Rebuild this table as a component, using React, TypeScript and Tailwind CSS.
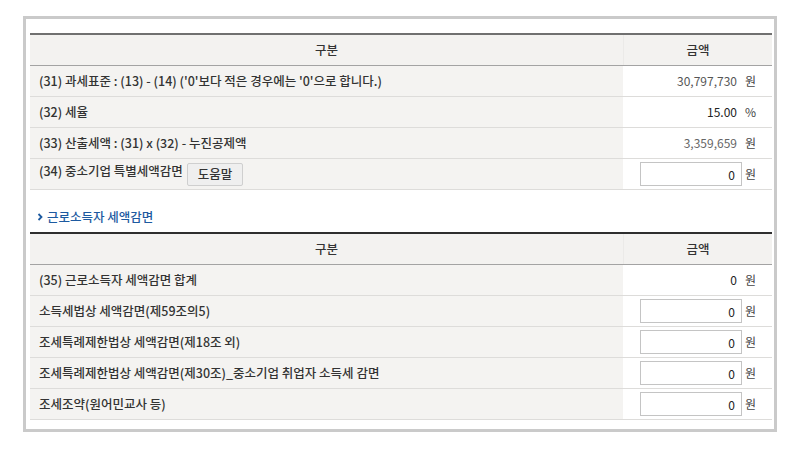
import React from 'react'

type Row = {
  label: string
  value?: string
  valueClass?: string
  unit?: string
  input?: boolean
  help?: boolean
}

const taxRows: Row[] = [
  { label: "(31) 과세표준 : (13) - (14) ('0'보다 적은 경우에는 '0'으로 합니다.)", value: '30,797,730', valueClass: 'text-[#555]' },
  { label: '(32) 세율', value: '15.00', valueClass: 'text-[#222]', unit: '%' },
  { label: '(33) 산출세액 : (31) x (32) - 누진공제액', value: '3,359,659', valueClass: 'text-[#666]' },
  { label: '(34) 중소기업 특별세액감면', input: true, help: true },
]

const reliefRows: Row[] = [
  { label: '(35) 근로소득자 세액감면 합계', value: '0', valueClass: 'text-[#222]' },
  { label: '소득세법상 세액감면(제59조의5)', input: true },
  { label: '조세특례제한법상 세액감면(제18조 외)', input: true },
  { label: '조세특례제한법상 세액감면(제30조)_중소기업 취업자 소득세 감면', input: true },
  { label: '조세조약(원어민교사 등)', input: true },
]

function HeaderRow() {
  return (
    <div className="flex h-[31px] border-b border-[#a3a3a3] bg-[#f3f2f0] text-[12.5px] font-medium text-[#333]">
      <div className="flex w-[593px] items-center justify-center">구분</div>
      <div className="flex flex-1 items-center justify-center border-l border-[#ebeae8]">금액</div>
    </div>
  )
}

function DataRow({ row }: { row: Row }) {
  return (
    <div className="flex h-[31px] border-b border-[#dddcda]">
      <div className="flex w-[593px] items-center gap-[4px] bg-[#f4f3f1] pl-[9px] text-[12.5px] font-medium text-[#333]">
        <span className={row.help ? '-mt-[6px]' : ''}>{row.label}</span>
        {row.help && (
          <button className="h-[23px] rounded-[2px] border border-[#cfcfcf] bg-[#efefef] px-[10px] text-[12.5px] text-[#333]">
            도움말
          </button>
        )}
      </div>
      <div className="flex flex-1 items-center justify-end bg-white pr-[15px] text-[12px]">
        {row.input ? (
          <input
            readOnly
            value="0"
            className="mr-[3px] h-[24px] w-[102px] border border-[#c4c4c4] bg-white pr-[6px] text-right text-[12px] text-[#222] outline-none"
          />
        ) : (
          <span className={`mr-[8px] ${row.valueClass ?? ''}`}>{row.value}</span>
        )}
        <span className="w-[12px] text-[12px] text-[#444]">{row.unit ?? '원'}</span>
      </div>
    </div>
  )
}

export default function App() {
  return (
    <div className="h-[450px] w-[801px] bg-white pl-[23px] pt-[16px] font-['Noto_Sans_CJK_KR',sans-serif]">
      <div className="h-[416px] w-[754px] border-[3px] border-[#cacaca] pl-[4px] pr-[2px] pt-[14px]">
        {/* 세액 계산 */}
        <div className="border-t-2 border-[#707070]">
          <HeaderRow />
          {taxRows.map(row => (
            <DataRow key={row.label} row={row} />
          ))}
        </div>

        <div className="flex h-[42px] items-center gap-[4px] pl-[7px] pt-[16px] pb-[4px] text-[12.5px] font-medium text-[#1d5aa0]">
          <svg width="6" height="8" viewBox="0 0 6 8">
            <polyline points="1.5,1 4.5,4 1.5,7" fill="none" stroke="#1d5aa0" strokeWidth="1.8" />
          </svg>
          <span>근로소득자 세액감면</span>
        </div>

        {/* 근로소득자 세액감면 */}
        <div className="border-t-2 border-[#2e2e2e]">
          <HeaderRow />
          {reliefRows.map(row => (
            <DataRow key={row.label} row={row} />
          ))}
        </div>
      </div>
    </div>
  )
}
